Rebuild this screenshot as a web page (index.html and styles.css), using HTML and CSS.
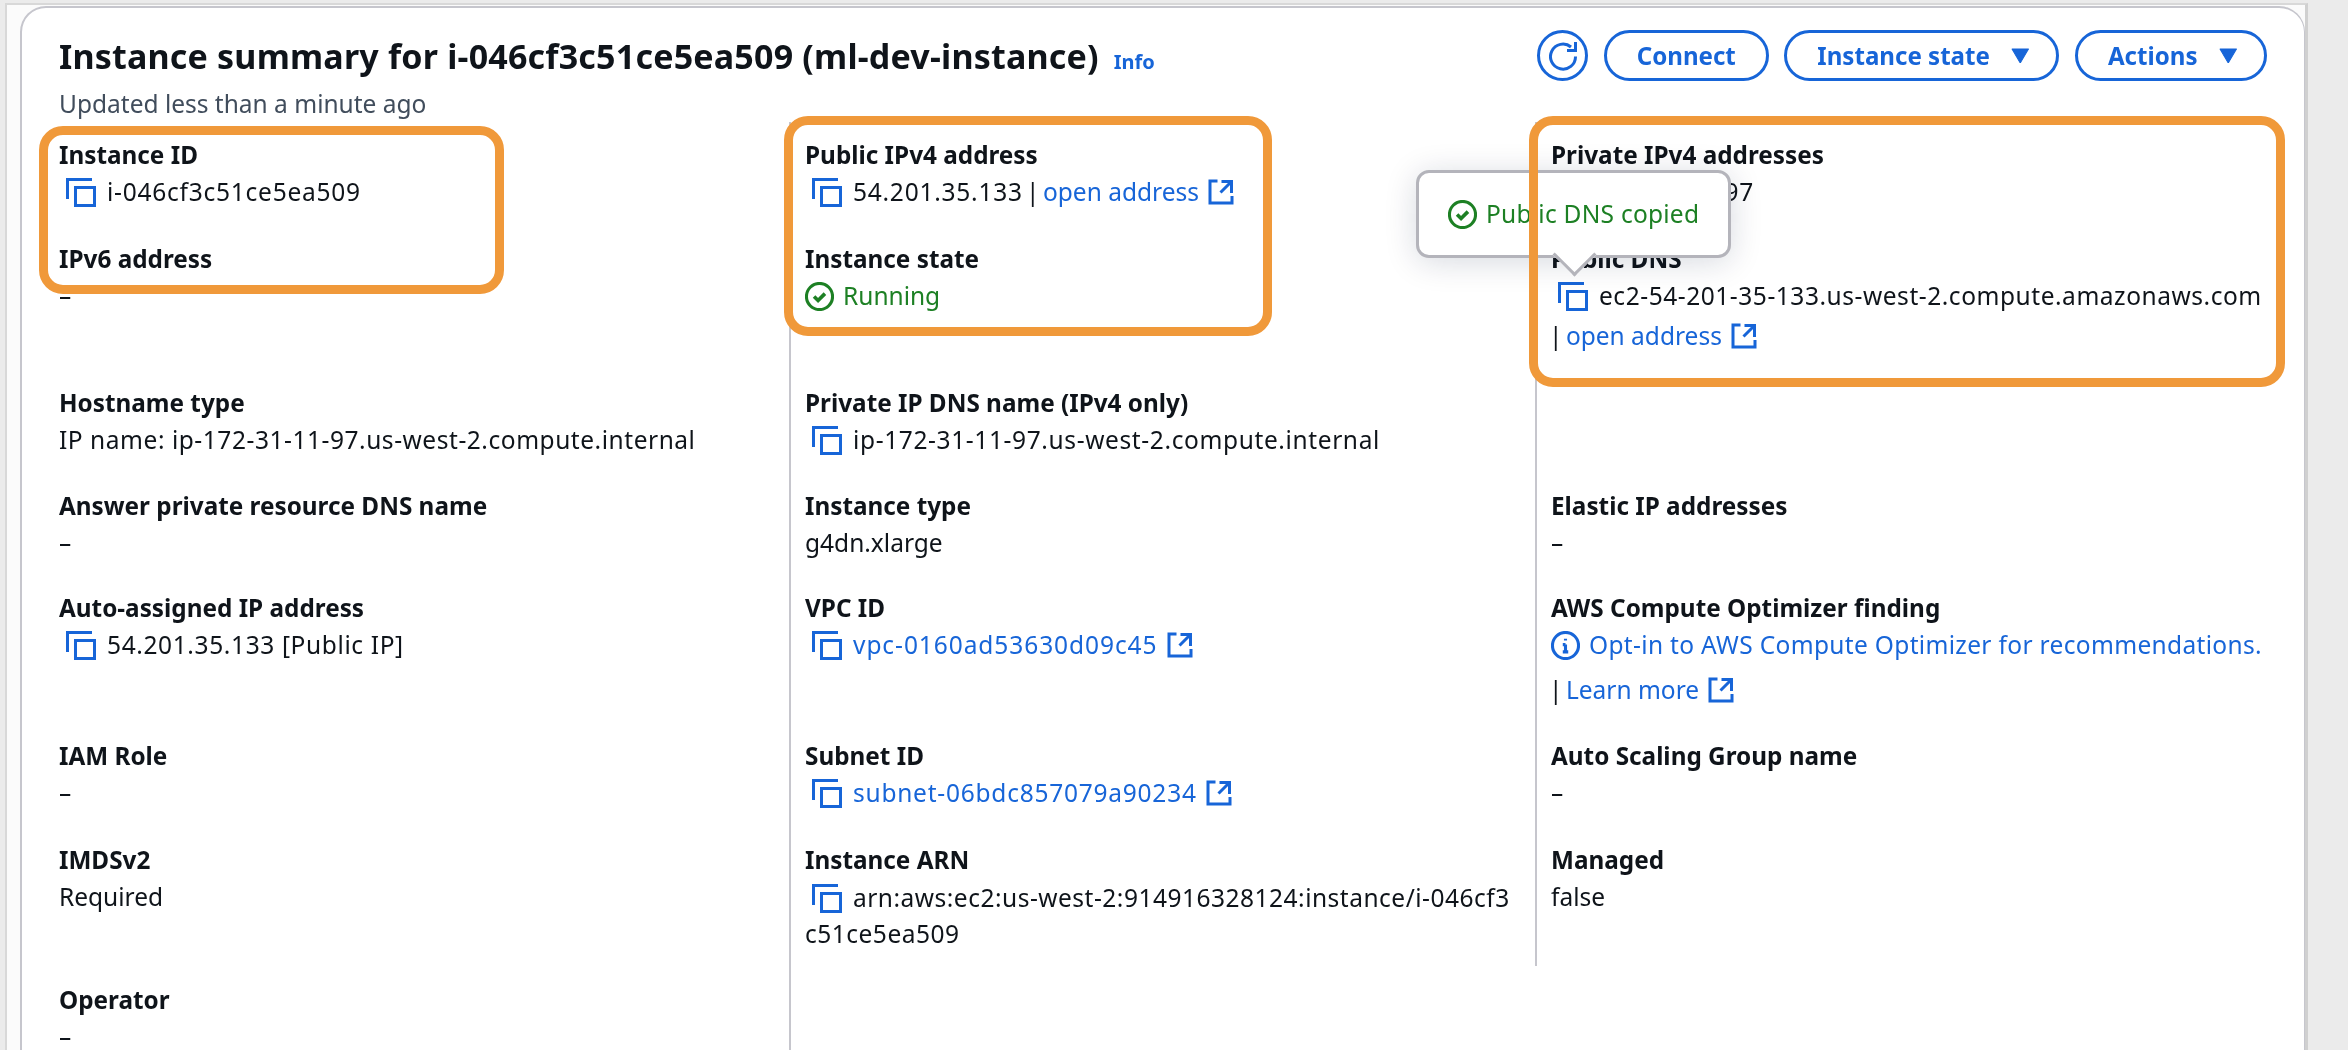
FILE: index.html
```html
<!DOCTYPE html>
<html lang="en">
<head>
<meta charset="utf-8">
<title>Instance summary</title>
<link rel="stylesheet" href="styles.css">
</head>
<body>
<svg class="defs" width="0" height="0" aria-hidden="true">
  <symbol id="i-copy" viewBox="0 0 30 29"><path d="M1.500 21V1.500H26"/><rect x="9.500" y="9.500" width="19" height="18"/></symbol>
  <symbol id="i-ext" viewBox="0 0 26 26"><path d="M23.500 14V2.500H13.500M23.500 2.500L12.500 13.500M9.500 2H2v22h22v-7"/></symbol>
  <symbol id="i-ok" viewBox="0 0 16 16"><circle cx="8" cy="8" r="7.200"/><path class="mark-check" d="m5 8 2.200 2.200 3.800-3.800"/></symbol>
  <symbol id="i-info" viewBox="0 0 16 16"><circle cx="8" cy="8" r="7.200"/><path d="M8 11.500V7.500M6.500 7.500H8M6.500 11.500h3M8 4.300v1"/></symbol>
  <symbol id="i-caret" viewBox="0 0 18 15"><path class="solid" d="M1 1h16L9 14.500z"/></symbol>
  <symbol id="i-refresh" viewBox="0 0 28 30"><path d="M26.500 15.500A12.500 12.500 0 1 1 22 6M26.500 1v8.500H18"/></symbol>
</svg>
<div class="frame">
  <main class="card">
    <header class="head">
      <div>
        <h1 class="title">Instance summary for i-046cf3c51ce5ea509 (ml-dev-instance) <a class="info">Info</a></h1>
        <p class="updated">Updated less than a minute ago</p>
      </div>
      <div class="actions">
        <button class="btn btn-icon"><svg class="ic-refresh"><use href="#i-refresh"/></svg></button>
        <button class="btn btn-plain">Connect</button>
        <button class="btn">Instance state<svg class="ic-caret"><use href="#i-caret"/></svg></button>
        <button class="btn">Actions<svg class="ic-caret"><use href="#i-caret"/></svg></button>
      </div>
    </header>

    <section class="grid">
      <div class="cell first">
        <div class="label">Instance ID</div>
        <div class="value"><svg class="ic-copy"><use href="#i-copy"/></svg><span class="sp7">i-046cf3c51ce5ea509</span></div>
      </div>
      <div class="cell sep first">
        <div class="label">Public IPv4 address</div>
        <div class="value"><svg class="ic-copy"><use href="#i-copy"/></svg><span class="sp7">54.201.35.133</span> <span class="bar">|</span> <a class="link">open address<svg class="ic-ext"><use href="#i-ext"/></svg></a></div>
      </div>
      <div class="cell sep first">
        <div class="label">Private IPv4 addresses</div>
        <div class="value"><svg class="ic-copy"><use href="#i-copy"/></svg><span class="sp7">172.31.11.97</span></div>
      </div>

      <div class="cell">
        <div class="label">IPv6 address</div>
        <div class="value">–</div>
      </div>
      <div class="cell sep">
        <div class="label">Instance state</div>
        <div class="value green"><svg class="ic-status"><use href="#i-ok"/></svg>Running</div>
      </div>
      <div class="cell sep">
        <div class="label">Public DNS</div>
        <div class="value"><svg class="ic-copy"><use href="#i-copy"/></svg><span class="sp5">ec2-54-201-35-133.us-west-2.compute.amazonaws.com</span></div>
        <div class="value second"><span class="bar bar-start">|</span> <a class="link">open address<svg class="ic-ext"><use href="#i-ext"/></svg></a></div>
      </div>

      <div class="cell">
        <div class="label">Hostname type</div>
        <div class="value"><span class="sp5">IP name: ip-172-31-11-97.us-west-2.compute.internal</span></div>
      </div>
      <div class="cell sep">
        <div class="label">Private IP DNS name (IPv4 only)</div>
        <div class="value"><svg class="ic-copy"><use href="#i-copy"/></svg><span class="sp6">ip-172-31-11-97.us-west-2.compute.internal</span></div>
      </div>
      <div class="cell sep"></div>

      <div class="cell">
        <div class="label">Answer private resource DNS name</div>
        <div class="value">–</div>
      </div>
      <div class="cell sep">
        <div class="label">Instance type</div>
        <div class="value">g4dn.xlarge</div>
      </div>
      <div class="cell sep">
        <div class="label">Elastic IP addresses</div>
        <div class="value">–</div>
      </div>

      <div class="cell">
        <div class="label">Auto-assigned IP address</div>
        <div class="value"><svg class="ic-copy"><use href="#i-copy"/></svg><span class="sp6">54.201.35.133 [Public IP]</span></div>
      </div>
      <div class="cell sep">
        <div class="label">VPC ID</div>
        <div class="value"><svg class="ic-copy"><use href="#i-copy"/></svg><a class="link"><span class="sp9">vpc-0160ad53630d09c45</span><svg class="ic-ext"><use href="#i-ext"/></svg></a></div>
      </div>
      <div class="cell sep">
        <div class="label">AWS Compute Optimizer finding</div>
        <div class="value"><a class="link"><svg class="ic-status"><use href="#i-info"/></svg><span class="sp3">Opt-in to AWS Compute Optimizer for recommendations.</span></a></div>
        <div class="value third"><span class="bar bar-start">|</span> <a class="link">Learn more<svg class="ic-ext"><use href="#i-ext"/></svg></a></div>
      </div>

      <div class="cell">
        <div class="label">IAM Role</div>
        <div class="value">–</div>
      </div>
      <div class="cell sep">
        <div class="label">Subnet ID</div>
        <div class="value"><svg class="ic-copy"><use href="#i-copy"/></svg><a class="link"><span class="sp7">subnet-06bdc857079a90234</span><svg class="ic-ext"><use href="#i-ext"/></svg></a></div>
      </div>
      <div class="cell sep">
        <div class="label">Auto Scaling Group name</div>
        <div class="value">–</div>
      </div>

      <div class="cell">
        <div class="label">IMDSv2</div>
        <div class="value">Required</div>
      </div>
      <div class="cell sep">
        <div class="label">Instance ARN</div>
        <div class="value arn"><svg class="ic-copy"><use href="#i-copy"/></svg><span class="sp4">arn:aws:ec2:us-west-2:914916328124:instance/i-046cf3<br>c51ce5ea509</span></div>
      </div>
      <div class="cell sep short">
        <div class="label">Managed</div>
        <div class="value">false</div>
      </div>

      <div class="cell">
        <div class="label">Operator</div>
        <div class="value">–</div>
      </div>
      <div class="cell sep"></div>
    </section>
  </main>
</div>

<div class="tooltip"><svg class="ic-status"><use href="#i-ok"/></svg><span class="sp2">Public DNS copied</span></div>
<div class="mark mark-a"></div>
<div class="mark mark-b"></div>
<div class="mark mark-c"></div>
</body>
</html>
```

FILE: styles.css
```css
* { box-sizing: border-box; }
html, body { margin: 0; height: 1050px; overflow: hidden; }
body {
  position: relative;
  background: #ebebeb;
  font-family: "Noto Sans", sans-serif;
  font-size: 24.500px;
  color: #0f141a;
  filter: blur(0.35px);
}
.defs { position: absolute; }
svg { fill: none; stroke: currentColor; }
.solid { fill: currentColor; stroke: currentColor; stroke-width: 1; stroke-linejoin: round; }
.mark-check { stroke-width: 2; }

.frame {
  width: 2303px;
  height: 1047px;
  overflow: hidden;
  margin: 3px 0 0 5px;
  padding: 1px 0 0 13px;
  background: #fbfbfb;
  border-top: 2px solid #d8d8d8;
  border-left: 2px solid #d8d8d8;
  border-right: 3px solid #d0d0d0;
}
.card {
  height: 1100px;
  padding: 22px 36px 0 37px;
  background: #fff;
  border: 2px solid #c6c6cd;
  border-right-width: 1px;
  border-radius: 26px 26px 0 0;
}

.head { display: flex; justify-content: space-between; height: 92px; }
.title { margin: 1px 0 0; font-size: 34px; line-height: 51px; font-weight: 700; letter-spacing: 0.2px; white-space: nowrap; }
.info { margin-left: 6px; font-size: 20px; font-weight: 700; letter-spacing: 0; color: #1765d8; }
.updated { margin: 0; line-height: 34px; color: #414d5c; }

.actions { display: flex; gap: 15.500px; align-items: flex-start; margin-right: 1px; }
.btn {
  display: flex;
  align-items: center;
  gap: 21px;
  height: 51px;
  padding: 0 27px 0 30px;
  background: #fff;
  border: 3px solid #1765d8;
  border-radius: 26px;
  color: #1765d8;
  font: 700 24.100px "Noto Sans", sans-serif;
}
.btn-plain { padding: 0 30px; }
.btn-icon { width: 51px; padding: 0; justify-content: center; }
.ic-refresh { width: 28px; height: 30px; stroke-width: 3; }
.ic-caret { width: 18.500px; height: 15.500px; }

.grid {
  display: grid;
  grid-template-columns: 730px 746px 1fr;
  grid-template-rows: 120px 144px 103px 102px 148px 104px 140px 120px;
  margin-right: -36px;
}
.cell { min-width: 0; }
.cell.first { padding-top: 16px; }
.cell.sep { border-left: 2px solid #c6c6cd; padding-left: 14px; padding-right: 14px; }
.cell.short { align-self: start; height: 123px; }
.label { font-weight: 700; font-size: 24.300px; line-height: 34px; margin-bottom: 3px; }
.value { line-height: 34px; white-space: nowrap; }
.value.second { margin-top: 5.500px; }
.value.third { margin-top: 11px; }
.value.arn { line-height: 36px; }
.green { color: #1d8024; }
.link { color: #1765d8; }

.sp2 { letter-spacing: 0.25px; }
.sp3 { letter-spacing: 0.33px; }
.sp4 { letter-spacing: 0.5px; }
.sp5 { letter-spacing: 0.54px; }
.sp6 { letter-spacing: 0.62px; }
.sp7 { letter-spacing: 0.76px; }
.sp9 { letter-spacing: 0.93px; }
.bar { margin: 0 -3px; }
.bar-start { margin: 0 -3px 0 -2px; }

.ic-copy { width: 30px; height: 29px; margin: 0 11px 0 7px; vertical-align: -6px; stroke-width: 3; color: #1765d8; }
.ic-ext { width: 26px; height: 26px; margin-left: 9px; vertical-align: -4px; stroke-width: 3; }
.ic-status { width: 29px; height: 29px; margin-right: 9px; vertical-align: -6px; stroke-width: 1.700; }

.tooltip {
  position: absolute;
  left: 1416px;
  top: 170px;
  width: 315px;
  height: 88px;
  padding: 26px 0 0 29px;
  background: #fff;
  border: 3px solid #b4b4bb;
  border-radius: 13px;
  box-shadow: 0 4px 32px rgba(0, 27, 61, 0.16);
  color: #1d8024;
  white-space: nowrap;
  line-height: 30px;
}
.tooltip::after {
  content: "";
  position: absolute;
  left: 140px;
  top: 66px;
  width: 28px;
  height: 28px;
  background: #fff;
  border-right: 3px solid #b4b4bb;
  border-bottom: 3px solid #b4b4bb;
  transform: rotate(45deg);
}

.mark {
  position: absolute;
  border: 9.500px solid #f0993a;
  border-radius: 24px;
}
.mark-a { left: 39px; top: 126px; width: 465px; height: 168px; }
.mark-b { left: 784px; top: 116px; width: 488px; height: 220px; }
.mark-c { left: 1529px; top: 116px; width: 756px; height: 271px; }
```
